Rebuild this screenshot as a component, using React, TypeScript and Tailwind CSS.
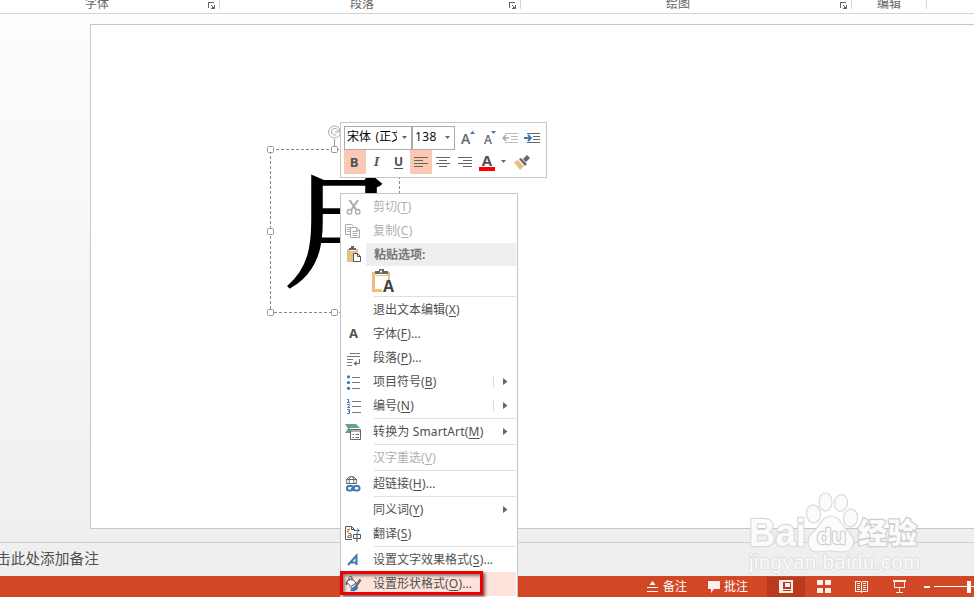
import type { ReactNode } from 'react';

const UI = "font-['Noto_Sans','Noto_Sans_CJK_SC',sans-serif]";

function Launcher() {
  return (
    <svg width="8" height="8" viewBox="0 0 8 8" shapeRendering="crispEdges" className="shrink-0">
      <path d="M0.5 6V0.5H6" fill="none" stroke="#666" />
      <path d="M3 3h1v1H3zM4 4h1v1H4zM6 3h1v4H3V6h1V5h2z" fill="#666" />
    </svg>
  );
}

function RibbonGroup({ label, width, pad, launcher }: { label: string; width: string; pad: string; launcher?: boolean }) {
  return (
    <div className={`flex h-[9px] shrink-0 items-start border-r border-[#d8d8d8] pr-[3px] ${width} ${pad}`}>
      <span className="-mt-[5px] whitespace-nowrap text-[12px] leading-[18px] text-[#666]">{label}</span>
      {launcher && <span className="ml-auto mt-[2px]"><Launcher /></span>}
    </div>
  );
}

function Ico({ children, w = 16, h = 16 }: { children: ReactNode; w?: number; h?: number }) {
  return <svg width={w} height={h} viewBox={`0 0 ${w} ${h}`} fill="none" className="-ml-px -mt-px shrink-0">{children}</svg>;
}

const Cut = () => (
  <Ico>
    <g stroke="#aaa">
      <path d="M4.500 1l6.500 9.500M13 1L6.500 10.500" strokeWidth="2" />
      <circle cx="4.500" cy="12.800" r="2.300" strokeWidth="1.300" /><circle cx="12.700" cy="12.800" r="2.300" strokeWidth="1.300" />
    </g>
  </Ico>
);
const Copy = () => (
  <Ico>
    <g stroke="#aaa">
      <path d="M5 11.500H.500V1.500H6.500L8.500 3.500" />
      <path d="M2 4.500h3M2 6.500h3M2 8.500h3" />
      <path d="M5.500 4.500h6l3 2.500v7.500H5.500zM11.500 4.500v3h3M7.500 8.500h5M7.500 10.500h5M7.500 12.500h5" />
    </g>
  </Ico>
);
const PasteIcon = () => (
  <Ico w={17}>
    <path d="M2 3h3v2h6V3h2v4H8v9H2z" fill="#e8bf7c" />
    <path d="M4 4V2h2V0h3v2h2v2z" fill="#666" />
    <path d="M8.500 7.500h4l3 3v5h-7zM12.500 7.500v3h3" stroke="#555" fill="#fff" />
  </Ico>
);
const PasteText = () => (
  <svg width="22" height="24" viewBox="0 0 22 24" className="shrink-0">
    <path d="M0 3h3v3h12V3h3v8h-2V7H3v13h7v3H0z" fill="#e8bf7c" />
    <path d="M3 5V2h4V0h5v2h4v3z" fill="#666" /><rect x="8" y="1.500" width="2" height="2" fill="#fff" />
    <text x="11" y="22.500" fontSize="16" fontWeight="700" fill="#444" fontFamily="Open Sans">A</text>
  </svg>
);
const FontA = () => <span className="-mt-[2px] w-4 pl-[3px] font-['Open_Sans',sans-serif] text-[13px] font-bold leading-4 text-[#505050]">A</span>;
const Paragraph = () => (
  <Ico>
    <g stroke="#777" shapeRendering="crispEdges"><path d="M5 3.500h10M2 6.500h13M2 9.500h6M2 12.500h5M2 15.500h5" /></g>
    <path d="M14.500 9v4.500H10.500" stroke="#666" /><path d="M8.500 13.500l3-2.500v5z" fill="#666" />
  </Ico>
);
const Bullets = () => (
  <Ico>
    <path d="M7 3h8v1H7zM7 8h8v1H7zM7 14h8v1H7z" fill="#777" />
    <circle cx="3.500" cy="2.800" r="1.600" fill="#3c78b4" /><circle cx="3.500" cy="8.500" r="1.600" fill="#3c78b4" /><circle cx="3.500" cy="14.300" r="1.600" fill="#3c78b4" />
  </Ico>
);
const Numbers = () => (
  <Ico>
    <path d="M7 3h9v1H7zM7 8h9v1H7zM7 14h9v1H7z" fill="#777" />
    <g stroke="#3c78b4"><path d="M2 1.500h1.500V4M2 4.500h3M2 6.500h2.500v1.300L2.500 9.500H5M2 11.500h2.500v4H2M3 13.500h1.500" /></g>
  </Ico>
);
const SmartArt = () => (
  <Ico w={18}>
    <path d="M0 0h11l4 4H5v5H0l3-4.500z" fill="#5fa58b" />
    <path d="M5.500 5.500h10v10h-10z" fill="#fff" stroke="#666" />
    <path d="M6 7h9M7.500 10.500h1.500M10.500 10.500h3.500M7.500 13.500h1.500M10.500 13.500h3.500" stroke="#666" />
  </Ico>
);
const LinkIcon = () => (
  <Ico>
    <g stroke="#666"><circle cx="6.500" cy="5.500" r="5" /><ellipse cx="6.500" cy="5.500" rx="2.300" ry="5" /><path d="M1 3.500h11M1 7.500h11" /></g>
    <rect x="1" y="8" width="15" height="8" rx="2" fill="#fff" />
    <g stroke="#3c78b4" strokeWidth="2"><rect x="2" y="10" width="6" height="4.500" rx="2.200" /><rect x="8.500" y="10" width="6" height="4.500" rx="2.200" /></g>
    <path d="M6 13l4-1.800" stroke="#3c78b4" strokeWidth="1.500" />
  </Ico>
);
const Translate = () => (
  <Ico w={17}>
    <path d="M7 13.500H.5V.5h6l3 3V5M6.500.5v3h3" stroke="#555" />
    <path d="M2 3.500h3M2 5.500h2" stroke="#e07b39" strokeWidth="1.500" />
    <text x="2" y="12" fontSize="9" fontWeight="600" fill="#555" fontFamily="Open Sans">a</text>
    <path d="M10 4.500h4M12 2.500l2.500 2-2.500 2" stroke="#3c78b4" />
    <path d="M8.500 8.500h7v4h-7zM12 6.500V16" stroke="#555" />
  </Ico>
);
const EffectA = () => (
  <Ico>
    <path d="M3 13L11.500 3.500V13M5.500 10.500h6" stroke="#3c78b4" strokeWidth="2" />
  </Ico>
);
const ShapeFormat = () => (
  <Ico w={18}>
    <path d="M2 4.500l5-2 4 4.500-5 3.500-4-4z" fill="#fff" stroke="#555" />
    <path d="M4 5V1.500c0-1.500 3-1.500 3 0V5" stroke="#555" />
    <path d="M15.500 3.500L11 10" stroke="#666" strokeWidth="2.500" />
    <path d="M4 10l3 2 4-3 2 2c0 3-3 5-8 4 2-1 1-3-1-5z" fill="#3c78b4" />
    <path d="M1.500 6v3" stroke="#555" strokeWidth="1.500" />
  </Ico>
);

interface RowProps {
  icon?: ReactNode;
  label: string;
  hot?: string;
  dots?: boolean;
  disabled?: boolean;
  arrow?: boolean;
  split?: boolean;
  active?: boolean;
}

function Row({ icon, label, hot, dots, disabled, arrow, split, active }: RowProps) {
  return (
    <div className={`flex h-6 shrink-0 items-center text-[12px] ${active ? 'bg-[#fde3dc]' : ''} ${disabled ? 'text-[#b1b1b1]' : 'text-[#505050]'}`}>
      <span className="flex w-[31px] shrink-0 items-center pl-[4px]">{icon}</span>
      <span className="whitespace-nowrap leading-[18px]">
        <span className={label.includes('SmartArt') ? 'tracking-[0.15px]' : ''}>{label}</span>
        {hot && <span className="tracking-[0.2px]">(<span className="underline underline-offset-[1.500px] decoration-1">{hot}</span>)</span>}
        {dots && '...'}
      </span>
      {arrow && (
        <span className="ml-auto mr-[8px] mt-[-2px] flex items-center">
          {split && <span className="mr-[9px] h-[13px] w-px bg-[#e0e0e0]" />}
          <svg width="5" height="7" viewBox="0 0 5 7"><path d="M0 0l4.500 3.500L0 7z" fill="#666" /></svg>
        </span>
      )}
    </div>
  );
}

const Sep = () => <div className="ml-[32px] h-[2px] shrink-0 border-t border-[#e0e0e0]" />;

function ContextMenu() {
  return (
    <div className="absolute left-[340px] top-[193px] z-20 flex h-[406px] w-[178px] flex-col border border-[#c4c4c4] bg-white px-px pt-px">
      <Row icon={<Cut />} label="剪切" hot="T" disabled />
      <Row icon={<Copy />} label="复制" hot="C" disabled />
      <div className="flex h-6 shrink-0 items-start pl-[4px]">
        <span className="mt-[4px]"><PasteIcon /></span>
        <div className="ml-[4px] h-[23px] flex-1 bg-[#eee] pl-[8px] text-[12px] font-bold leading-[23px] text-[#757575]">粘贴选项:</div>
      </div>
      <div className="h-[29px] shrink-0 pl-[30px] pt-[2px]"><PasteText /></div>
      <Sep />
      <Row label="退出文本编辑" hot="X" />
      <Row icon={<FontA />} label="字体" hot="F" dots />
      <Row icon={<Paragraph />} label="段落" hot="P" dots />
      <Row icon={<Bullets />} label="项目符号" hot="B" arrow split />
      <Row icon={<Numbers />} label="编号" hot="N" arrow split />
      <Sep />
      <Row icon={<SmartArt />} label="转换为 SmartArt" hot="M" arrow />
      <Sep />
      <Row label="汉字重选" hot="V" disabled />
      <Sep />
      <Row icon={<LinkIcon />} label="超链接" hot="H" dots />
      <Sep />
      <Row label="同义词" hot="Y" arrow />
      <Row icon={<Translate />} label="翻译" hot="S" />
      <Sep />
      <Row icon={<EffectA />} label="设置文字效果格式" hot="S" dots />
      <Row icon={<ShapeFormat />} label="设置形状格式" hot="O" dots active />
    </div>
  );
}

const Caret = () => <svg width="5" height="3" viewBox="0 0 5 3" className="shrink-0"><path d="M0 0h5L2.500 3z" fill="#666" /></svg>;

function AlignIcon({ kind }: { kind: 'left' | 'center' | 'right' }) {
  const d = {
    left: 'M0 .5h14M0 3.500h9M0 6.500h14M0 9.500h9',
    center: 'M0 .5h14M3 3.500h8M0 6.500h14M3 9.500h8',
    right: 'M0 .5h14M5 3.500h9M0 6.500h14M5 9.500h9',
  }[kind];
  return <svg width="14" height="10" viewBox="0 0 14 10" shapeRendering="crispEdges"><path d={d} stroke="#666" /></svg>;
}

function Indent({ color, line, right }: { color: string; line: string; right?: boolean }) {
  return (
    <svg width="16" height="12" viewBox="0 0 16 12" fill="none">
      <path d="M3 1.500h13M9 4.500h7M9 7.500h7M3 10.500h13" stroke={line} shapeRendering="crispEdges" />
      <path d={right ? 'M0 6h6M4 3l3 3-3 3' : 'M1 6h6M4 3L1 6l3 3'} stroke={color} strokeWidth={right ? 2 : 1.5} />
    </svg>
  );
}

function MiniToolbar() {
  return (
    <div className="absolute left-[340px] top-[122px] z-20 flex h-[56px] w-[207px] flex-col border border-[#c6c6c6] bg-white pl-[3px] pt-[3px] font-['Open_Sans','Noto_Sans_CJK_SC',sans-serif] text-[#505050]">
      <div className="flex h-6 shrink-0">
        <div className="flex h-6 w-[68px] items-center border border-[#ababab] pl-[2px] text-[12px] text-black">
          <span className="-mt-[2px] w-[50px] overflow-hidden whitespace-nowrap leading-[18px] [word-spacing:1.500px]">宋体 (正文)</span>
          <span className="-mt-px ml-[5px] flex"><Caret /></span>
        </div>
        <div className="flex h-6 w-[43px] items-center border border-[#ababab] pl-[2px] text-[12px] text-black">
          <span className="-mt-[2px] w-[30px] tracking-[0.4px]">138</span><span className="-mt-px flex"><Caret /></span>
        </div>
        <div className="flex flex-1 items-center pl-[6px]">
          <span className="mt-px w-[9px] text-[14px] font-semibold leading-none text-[#666]">A</span>
          <svg width="5" height="3" viewBox="0 0 5 3" className="mb-[11px]"><path d="M0 3h5L2.500 0z" fill="#3c78b4" /></svg>
          <span className="ml-[9px] mt-[3px] w-[8px] text-[12px] font-semibold leading-none text-[#666]">A</span>
          <svg width="5" height="3" viewBox="0 0 5 3" className="mb-[12px] ml-[-1px]"><path d="M0 0h5L2.500 3z" fill="#3c78b4" /></svg>
          <span className="ml-[6px]"><Indent color="#aaa" line="#bbb" /></span>
          <span className="ml-[6px]"><Indent color="#3c78b4" line="#666" right /></span>
        </div>
      </div>
      <div className="flex h-6 shrink-0 items-center text-[13px]">
        <span className="flex h-6 w-[22px] items-center justify-center bg-[#fac9b3] pb-px pr-[2px] font-bold leading-[18px]">B</span>
        <span className="flex h-6 w-[22px] items-center justify-center pr-px font-['Noto_Serif','DejaVu_Serif',serif] text-[12px] font-bold italic leading-[18px]">I</span>
        <span className="flex h-6 w-[22px] items-center justify-center pr-px text-[12px] font-bold leading-[18px] underline underline-offset-2">U</span>
        <span className="flex h-6 w-[22px] items-center justify-center bg-[#fac9b3]"><AlignIcon kind="left" /></span>
        <span className="flex h-6 w-[22px] items-center justify-center"><AlignIcon kind="center" /></span>
        <span className="flex h-6 w-[22px] items-center justify-center"><AlignIcon kind="right" /></span>
        <span className="ml-[3px] mt-[-3px] flex h-[20px] w-4 flex-col items-center border-b-4 border-[#f00] text-[15px] font-bold leading-[19px]">A</span>
        <span className="mb-px ml-[6px] flex"><Caret /></span>
        <svg width="17" height="15" viewBox="0 0 17 15" className="ml-[8px]">
          <path d="M0 7l4-2 6 6-4 4z" fill="#e8bf7c" />
          <path d="M5 4l2-1 6 6-2 2zM9 4l4-4 3 3-4 4z" fill="#666" />
        </svg>
      </div>
    </div>
  );
}

function TextBox() {
  return (
    <div className="absolute left-[270px] top-[131px]">
      <div className="relative h-[183px] w-[131px]">
        <span className="absolute left-[13px] top-[14px] block origin-left scale-x-[0.945] whitespace-nowrap font-['Noto_Serif_CJK_SC','Noto_Sans_CJK_SC',serif] text-[126px] font-medium leading-[156px] text-black [-webkit-text-stroke:2px_black]">月</span>
        <svg className="absolute -top-[6px] left-0 overflow-visible" width="131" height="190" viewBox="0 0 131 190" fill="none">
          <path d="M.5 24.500H129.500V187.500H.5z" stroke="#888" strokeDasharray="3 2" shapeRendering="crispEdges" />
          <path d="M64.500 14v8" stroke="#999" />
          <circle cx="64.500" cy="7" r="6" fill="#fff" stroke="#aaa" />
          <path d="M66.500 9.500a3.300 3.300 0 1 1 1.500-3M65 7h4.500V3.500" stroke="#aaa" />
          {[[0.5, 24.5], [64.5, 24.5], [0.5, 106.5], [0.5, 187.5], [64.5, 187.5]].map(([x, y]) => (
            <rect key={`${x}-${y}`} x={x - 3} y={y - 3} width="6" height="6" rx="1" fill="#fff" stroke="#999" />
          ))}
        </svg>
      </div>
    </div>
  );
}

function Watermark() {
  return (
    <svg className="absolute left-[740px] top-[485px] z-10" width="190" height="94" viewBox="0 0 190 94">
      <g fill="#fbfbfb" stroke="#dadada" strokeWidth="1.200" fontFamily="'Liberation Sans','Noto Sans CJK SC',sans-serif">
        <ellipse cx="85.500" cy="17" rx="6.500" ry="9" /><ellipse cx="101" cy="18" rx="6.500" ry="8.500" transform="rotate(8 101 18)" />
        <ellipse cx="73.500" cy="29" rx="7" ry="9" transform="rotate(-8 73.500 29)" /><ellipse cx="110.500" cy="33" rx="7" ry="9" transform="rotate(8 110.500 33)" />
        <path d="M91 31C82 31 79 42 74 46C65 53 67 66 76 67C83 67 88 65 92 66C98 67 108 68 111 64C117 56 112 50 107 45C101 40 100 31 91 31Z" />
        <g style={{ paintOrder: 'stroke' }} strokeLinejoin="round" strokeWidth="2.500">
          <text x="9" y="61" fontSize="39" fontWeight="700" textLength="57" lengthAdjust="spacingAndGlyphs" stroke="#dadada">Bai</text>
          <text x="77" y="59" fontSize="22" fontWeight="700" textLength="29" lengthAdjust="spacingAndGlyphs" stroke="#d2d2d2">du</text>
          <text x="118" y="59" fontSize="29" fontWeight="900" textLength="59" stroke="#cfcfcf">经验</text>
          <text x="9" y="84" fontSize="20" textLength="171" lengthAdjust="spacing" stroke="#dedede" strokeWidth="1.800">jingyan.baidu.com</text>
        </g>
      </g>
    </svg>
  );
}

function StatusBar() {
  return (
    <div className="flex h-[21px] shrink-0 items-center bg-[#d24726] text-[12px] text-white">
      <svg className="ml-[647px] shrink-0" width="11" height="11" viewBox="0 0 11 11"><path d="M2.500 4L5.500 0l3 4zM0 6h11v1H0zM0 10h11v1H0z" fill="#fff" /></svg>
      <span className="ml-[5px] w-6 shrink-0 leading-[18px]">备注</span>
      <svg className="ml-[21px] shrink-0" width="12" height="12" viewBox="0 0 12 12"><path d="M0 0h12v8H6l-3 4V8H0z" fill="#fceeea" /></svg>
      <span className="ml-[4px] w-6 shrink-0 leading-[18px]">批注</span>
      <div className="ml-[19px] flex h-[20px] w-[38px] shrink-0 items-start justify-center self-end bg-[#b83b1d] pt-[3px]">
        <svg width="14" height="13" viewBox="0 0 14 13" fill="none" shapeRendering="crispEdges"><path d="M0 0h14v13H0zM4 2v7h8V2zM4 10v1h8v-1z" fill="#fceeea" fillRule="evenodd" /><path d="M6 3h5v4H6z" fill="#fceeea" /></svg>
      </div>
      <svg className="ml-[12px] shrink-0" width="14" height="13" viewBox="0 0 14 13"><path d="M0 0h6v5H0zM8 0h6v5H8zM0 8h6v5H0zM8 8h6v5H8z" fill="#fceeea" /></svg>
      <svg className="ml-[24px] shrink-0" width="13" height="12" viewBox="0 0 13 12" fill="none" stroke="#fceeea" shapeRendering="crispEdges"><path d="M.5.5h5l1 1 1-1h5v10h-5l-1 1-1-1h-5zM6.500 1v11M2 2.500h3M2 4.500h3M2 6.500h3M2 8.500h3M8 2.500h3M8 4.500h3M8 6.500h3M8 8.500h3" /></svg>
      <svg className="ml-[25px] shrink-0" width="13" height="13" viewBox="0 0 13 13" fill="none" stroke="#fceeea" shapeRendering="crispEdges"><path d="M0 1h13" strokeWidth="2" /><path d="M1.500 1v6.500h10V1M6.500 8v4M3 12.500h7" /></svg>
      <span className="ml-[18px] h-[2px] w-[6px] shrink-0 bg-white" />
      <span className="ml-[4px] h-px w-[33px] shrink-0 bg-white" />
      <span className="h-3 w-[4px] shrink-0 bg-white" />
      <span className="h-px w-4 shrink-0 bg-white" />
    </div>
  );
}

export default function App() {
  return (
    <div className={`relative flex h-[597px] w-[974px] flex-col overflow-hidden bg-[#efefef] ${UI}`}>
      <header className="flex h-[14px] shrink-0 overflow-hidden border-b border-[#d4d4d4] bg-white">
        <RibbonGroup label="字体" width="w-[220px]" pad="pl-[85px]" launcher />
        <RibbonGroup label="段落" width="w-[301px]" pad="pl-[130px]" launcher />
        <RibbonGroup label="绘图" width="w-[331px]" pad="pl-[145px]" launcher />
        <RibbonGroup label="编辑" width="w-[75px]" pad="pl-[25px]" />
      </header>
      <main className="h-[528px] shrink-0 bg-linear-to-b from-[#fdfdfd] to-[#efefef] pl-[90px] pt-[10px]">
        <div className="h-[505px] border border-r-0 border-[#c6c6c6] bg-white" />
      </main>
      <section className="flex h-[34px] shrink-0 items-center border-t border-[#d0d0d0] bg-[#efefef] pb-[4px]">
        <span className="-ml-[4px] whitespace-nowrap text-[14.700px] leading-5 text-[#505050]">击此处添加备注</span>
      </section>
      <StatusBar />
      <TextBox />
      <Watermark />
      <MiniToolbar />
      <ContextMenu />
      <div className="absolute left-[340px] top-[571px] z-30 h-[24px] w-[143px] border-3 border-[#f00000] shadow-[2px_2px_3px_rgba(0,0,0,0.6),inset_2px_2px_3px_rgba(0,0,0,0.45)]" />
    </div>
  );
}
